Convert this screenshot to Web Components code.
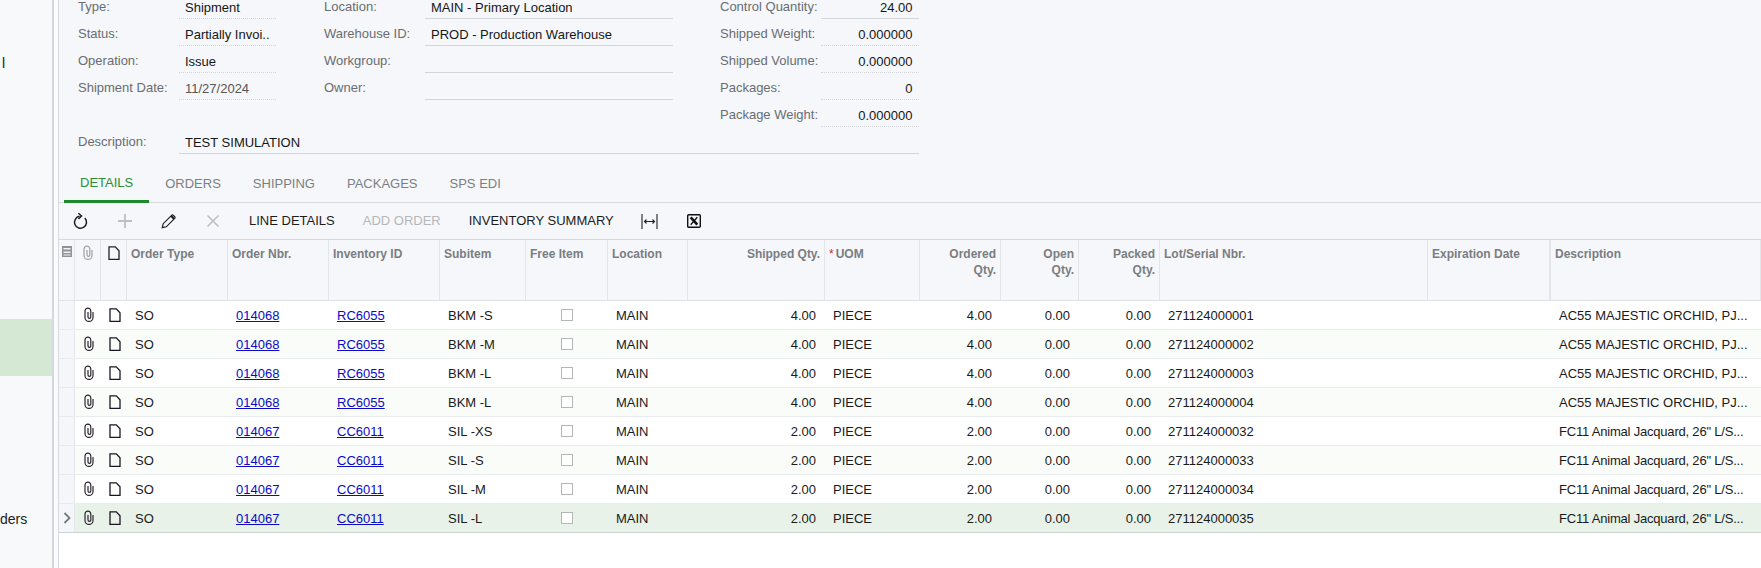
<!DOCTYPE html>
<html lang="en">
<head>
<meta charset="utf-8">
<title>Shipment</title>
<style>
html,body{margin:0;height:568px;overflow:hidden;background:#fafbfc;font:13px/16px "Liberation Sans",Arial,sans-serif;color:#1c1c1c}
</style>
</head>
<body>
<app-shell>
  <side-nav slot="sidebar">
    <nav-item>l</nav-item><nav-item></nav-item><nav-item></nav-item><nav-item></nav-item><nav-item></nav-item>
    <nav-item active></nav-item><nav-item></nav-item><nav-item></nav-item><nav-item>ders</nav-item>
  </side-nav>
  <shipment-form>
    <form-column style="--w:198px">
      <form-field label="Type:" kind="dotted">Shipment</form-field>
      <form-field label="Status:" kind="dotted">Partially Invoi..</form-field>
      <form-field label="Operation:" kind="dotted">Issue</form-field>
      <form-field label="Shipment Date:" kind="dotted" muted>11/27/2024</form-field>
    </form-column>
    <form-column style="--w:349px">
      <form-field label="Location:">MAIN - Primary Location</form-field>
      <form-field label="Warehouse ID:">PROD - Production Warehouse</form-field>
      <form-field label="Workgroup:"></form-field>
      <form-field label="Owner:"></form-field>
    </form-column>
    <form-column style="--w:199px">
      <form-field label="Control Quantity:" right>24.00</form-field>
      <form-field label="Shipped Weight:" kind="dotted" right>0.000000</form-field>
      <form-field label="Shipped Volume:" kind="dotted" right>0.000000</form-field>
      <form-field label="Packages:" kind="dotted" right>0</form-field>
      <form-field label="Package Weight:" kind="dotted" right>0.000000</form-field>
    </form-column>
    <form-field slot="wide" label="Description:">TEST SIMULATION</form-field>
  </shipment-form>
  <tab-bar>
    <tab-item active>DETAILS</tab-item><tab-item>ORDERS</tab-item><tab-item>SHIPPING</tab-item><tab-item>PACKAGES</tab-item><tab-item>SPS EDI</tab-item>
  </tab-bar>
  <grid-toolbar>
    <tool-button icon="refresh"></tool-button>
    <tool-button icon="plus"></tool-button>
    <tool-button icon="pencil"></tool-button>
    <tool-button icon="cross"></tool-button>
    <tool-button>LINE DETAILS</tool-button>
    <tool-button disabled>ADD ORDER</tool-button>
    <tool-button>INVENTORY SUMMARY</tool-button>
    <tool-button icon="fit"></tool-button>
    <tool-button icon="excel"></tool-button>
  </grid-toolbar>
  <data-grid id="grid"></data-grid>
</app-shell>
<script>
const ICONS = {
  clip:'<svg width="14" height="16" viewBox="0 0 14 16" fill="none" stroke="currentColor" stroke-width="1.2"><path d="M6 5v5a1.400 1.400 0 0 0 2.800 0V4a2.900 2.900 0 0 0-5.800 0v6.400a4 4 0 0 0 8 0V5"/></svg>',
  doc:'<svg width="14" height="16" viewBox="0 0 14 16" fill="none" stroke="currentColor" stroke-width="1.3"><path d="M2 1.800h6.300L12 5.800v8.500H2z"/></svg>',
  note:'<svg width="12" height="13" viewBox="0 0 12 13"><path fill="#8f9499" d="M1 1h10v11H1z"/><path fill="#f0f2f4" d="M2.500 3h7v1.500h-7zM2.500 6.500h7v1.500h-7zM2.500 9.500h7v1h-7z"/></svg>',
  chevron:'<svg width="8" height="12" viewBox="0 0 8 12" fill="none" stroke="#767a80" stroke-width="1.800"><path d="M1.500 1l5 5-5 5"/></svg>',
  refresh:'<svg width="18" height="18" viewBox="0 0 18 18" fill="none" stroke="#1d1d1d" stroke-width="1.500"><path d="M12.800 6A6 6 0 1 1 7.500 4.300"/><path d="M6.400 1.200L9.500 4 6.400 6.900"/></svg>',
  plus:'<svg width="16" height="16" viewBox="0 0 16 16" fill="none" stroke="#bcbfc2" stroke-width="1.800"><path d="M8 1v14M1 8h14"/></svg>',
  pencil:'<svg width="16" height="16" viewBox="0 0 16 16" fill="none" stroke="#1d1d1d" stroke-width="1.200"><path d="M1.300 14.700l.9-4 8.400-8.400a1.200 1.200 0 0 1 1.700 0l1.400 1.400a1.200 1.200 0 0 1 0 1.700l-8.400 8.400z"/><path d="M10.200 3l2.800 2.800" stroke-width="2"/></svg>',
  cross:'<svg width="14" height="14" viewBox="0 0 14 14" fill="none" stroke="#bcbfc2" stroke-width="1.500"><path d="M1.500 1.500l11 11M12.500 1.500l-11 11"/></svg>',
  fit:'<svg width="17" height="17" viewBox="0 0 17 17" fill="none" stroke="#222" stroke-width="1.100"><path d="M1 1v15M16 1v15M3.500 8.500h10"/><path d="M5.500 6.500l-2 2 2 2M11.500 6.500l2 2-2 2"/></svg>',
  excel:'<svg width="14" height="14" viewBox="0 0 14 14" fill="none" stroke="#111"><rect x=".7" y=".7" width="12.600" height="12.600" rx="1" stroke-width="1.400"/><path d="M3.700 3.300l6.600 7.400" stroke-width="2.600"/><path d="M10.300 3.300l-6.600 7.400" stroke-width="1.300"/></svg>'
};
function el(name, css, html, extra){
  customElements.define(name, class extends HTMLElement{
    constructor(){
      super();
      this.attachShadow({mode:'open'}).innerHTML='<style>'+css+'</style>'+(typeof html==='function'?html(this):html);
    }
    connectedCallback(){ if(extra) extra(this); }
  });
}
el('app-icon',':host{display:inline-flex;line-height:0}','',h=>{h.shadowRoot.innerHTML+=ICONS[h.getAttribute('name')]||'';});
el('app-shell',
 ':host{display:flex;width:1761px;height:568px;overflow:hidden;background:#fafbfc}'+
 'main{flex:1;min-width:0;margin-left:4px;border-left:1px solid #d6dade;background:#fff;display:flex;flex-direction:column}',
 '<slot name="sidebar"></slot><main><slot></slot></main>');
el('side-nav',':host{display:flex;flex:none;flex-direction:column;width:52px;padding-top:34px;background:#f7f9fb;border-right:2px solid #d5d8dc;overflow:hidden}','<slot></slot>');
el('nav-item',':host{display:flex;flex:none;align-items:center;height:57px;padding-left:2px;white-space:nowrap;color:#222;font-size:14px}:host([active]){background:#d4e8d4}:host(:last-child){padding-left:0}','<slot></slot>');
el('shipment-form',
 ':host{display:block;margin-top:-8px;background:#f5f7fa;padding-left:19px;height:162px}'+
 '.cols{display:flex;height:135px}.cols ::slotted(form-column:nth-child(2)){margin:0 47px 0 48px}'+
 '.wide{display:block;width:841px}',
 '<div class="cols"><slot></slot></div><div class="wide"><slot name="wide"></slot></div>');
el('form-column',':host{display:flex;flex:none;flex-direction:column;width:var(--w)}','<slot></slot>');
el('form-field',
 ':host{display:flex;height:27px;box-sizing:border-box;--line:1px solid #d4d7da}'+
 ':host([kind=dotted]){--line:1px dotted #d2d5d9}'+
 '.l{flex:none;width:100.5px;padding-top:7px;color:#696d72;white-space:nowrap}'+
 '.v{flex:1;min-width:0;padding:8px 6.500px 0 6.500px;border-bottom:var(--line);color:#161616;white-space:nowrap;overflow:hidden}'+
 ':host([right]) .v{text-align:right}:host([muted]) .v{color:#555}',
 h=>'<div class="l">'+h.getAttribute('label')+'</div><div class="v"><slot></slot></div>');
el('tab-bar',':host{display:flex;height:49px;box-sizing:border-box;padding-left:5px;background:#f5f7fa;border-bottom:1px solid #d6d9dd}','<slot></slot>');
el('tab-item',
 ':host{display:block;height:48px;box-sizing:border-box;padding:22px 16px 0;color:#7b7f84;white-space:nowrap}'+
 ':host([active]){color:#2c8f35;padding-top:21px;height:49px;border-bottom:3px solid #1b8a2a}','<slot></slot>');
el('grid-toolbar',':host{display:flex;height:37px;box-sizing:border-box;background:#f5f7fa;border-bottom:1px solid #d6d9dd}','<slot></slot>');
el('tool-button',
 ':host{display:flex;align-items:center;justify-content:center;flex:none;min-width:44px;height:36px;box-sizing:border-box;padding:0 14px;color:#1c1c1c;white-space:nowrap}'+
 ':host([icon]){width:44px;padding:0}:host([disabled]){color:#b5b8bb}'+
 'span{margin-top:-1px}',
 h=>h.hasAttribute('icon')?'<app-icon name="'+h.getAttribute('icon')+'"></app-icon>':'<span><slot></slot></span>');
el('data-grid',
 ':host{display:block;--cols:16px 26px 26px 101px 101px 111px 86px 82px 80px 137px 95px 81px 78px 81px 268px 123px 210px}','<slot></slot>');
el('grid-row',
 ':host{display:grid;grid-template-columns:var(--cols);height:29px;box-sizing:border-box;border-bottom:1px solid #e9ecee;background:#fff}'+
 ':host(:nth-child(odd)){background:#fafcf9}'+
 ':host([head]){height:61px;background:#f5f7fa;border-bottom:1px solid #dfe2e6}'+
 ':host([selected]){background:#e8f2e8;border-bottom-color:#cfd3d7}','<slot></slot>');
el('grid-cell',
 ':host{display:block;min-width:0;box-sizing:border-box;padding:0 8px;line-height:29px;white-space:nowrap;overflow:hidden;color:#1a1a1a}'+
 ':host([right]){text-align:right;padding-right:9px}'+
 ':host([flush]){padding-right:0}'+
 ':host([tight]){letter-spacing:-.2px}'+
 ':host([center]){display:flex;align-items:center;justify-content:center;padding:0}'+
 ':host([stub]){background:#f4f6f9;border-right:1px solid #e4e7ea}'+
 ':host([head]){padding:6px 4px 0;line-height:16px;font-size:12px;font-weight:700;color:#7a7d81;white-space:normal;border-right:1px solid #e3e6e9}'+
 ':host([head][right]){padding-right:4px}'+
 ':host([head][center]){align-items:flex-start;padding:5px 0 0;color:#9ea2a6}'+
 ':host([thick]){border-right-width:2px}',
 '<slot></slot>');
el('grid-link',':host{display:inline}a{color:#0a0ac8;text-decoration:underline}','<a href="#"><slot></slot></a>');
el('grid-check',':host{display:block;width:10px;height:10px;border:1px solid #b4b6b8;background:#fff}','');

const heads=[['Order Type'],['Order Nbr.'],['Inventory ID'],['Subitem'],['Free Item'],['Location'],['Shipped Qty.',1],['UOM',0,1],['Ordered<br>Qty.',1],['Open<br>Qty.',1],['Packed<br>Qty.',1],['Lot/Serial Nbr.'],['Expiration Date',0,0,1],['Description']];
const A='AC55 MAJESTIC ORCHID, PJ...', F='FC11 Animal Jacquard, 26" L/S...';
const rows=[
 ['014068','RC6055','BKM -S','4.00','271124000001',A],
 ['014068','RC6055','BKM -M','4.00','271124000002',A],
 ['014068','RC6055','BKM -L','4.00','271124000003',A],
 ['014068','RC6055','BKM -L','4.00','271124000004',A],
 ['014067','CC6011','SIL -XS','2.00','271124000032',F],
 ['014067','CC6011','SIL -S','2.00','271124000033',F],
 ['014067','CC6011','SIL -M','2.00','271124000034',F],
 ['014067','CC6011','SIL -L','2.00','271124000035',F]
];
let h='<grid-row head><grid-cell head center stub style="background:none"><app-icon name="note"></app-icon></grid-cell>'+
 '<grid-cell head center><app-icon name="clip"></app-icon></grid-cell>'+
 '<grid-cell head center style="color:#222"><app-icon name="doc"></app-icon></grid-cell>';
heads.forEach(c=>{
  h+='<grid-cell head'+(c[1]?' right':'')+(c[3]?' thick':'')+'>'+(c[2]?'<span style="color:#d22;font-weight:400;margin-right:2px">*</span>':'')+c[0]+'</grid-cell>';
});
h+='</grid-row>';
rows.forEach((r,i)=>{
  const last=i===rows.length-1;
  h+='<grid-row'+(last?' selected':'')+'>'+
   '<grid-cell center stub>'+(last?'<app-icon name="chevron"></app-icon>':'')+'</grid-cell>'+
   '<grid-cell center style="color:#2b2530;padding-left:2px"><app-icon name="clip"></app-icon></grid-cell>'+
   '<grid-cell center style="color:#1d1525;padding-left:2px"><app-icon name="doc"></app-icon></grid-cell>'+
   '<grid-cell>SO</grid-cell><grid-cell><grid-link>'+r[0]+'</grid-link></grid-cell><grid-cell><grid-link>'+r[1]+'</grid-link></grid-cell>'+
   '<grid-cell>'+r[2]+'</grid-cell><grid-cell center><grid-check></grid-check></grid-cell><grid-cell>MAIN</grid-cell>'+
   '<grid-cell right>'+r[3]+'</grid-cell><grid-cell>PIECE</grid-cell><grid-cell right>'+r[3]+'</grid-cell>'+
   '<grid-cell right>0.00</grid-cell><grid-cell right>0.00</grid-cell><grid-cell>'+r[4]+'</grid-cell><grid-cell></grid-cell>'+
   '<grid-cell flush'+(r[5]===F?' tight':'')+'>'+r[5].replace(/"/g,'&quot;')+'</grid-cell></grid-row>';
});
document.getElementById('grid').innerHTML=h;
</script>
</body>
</html>
